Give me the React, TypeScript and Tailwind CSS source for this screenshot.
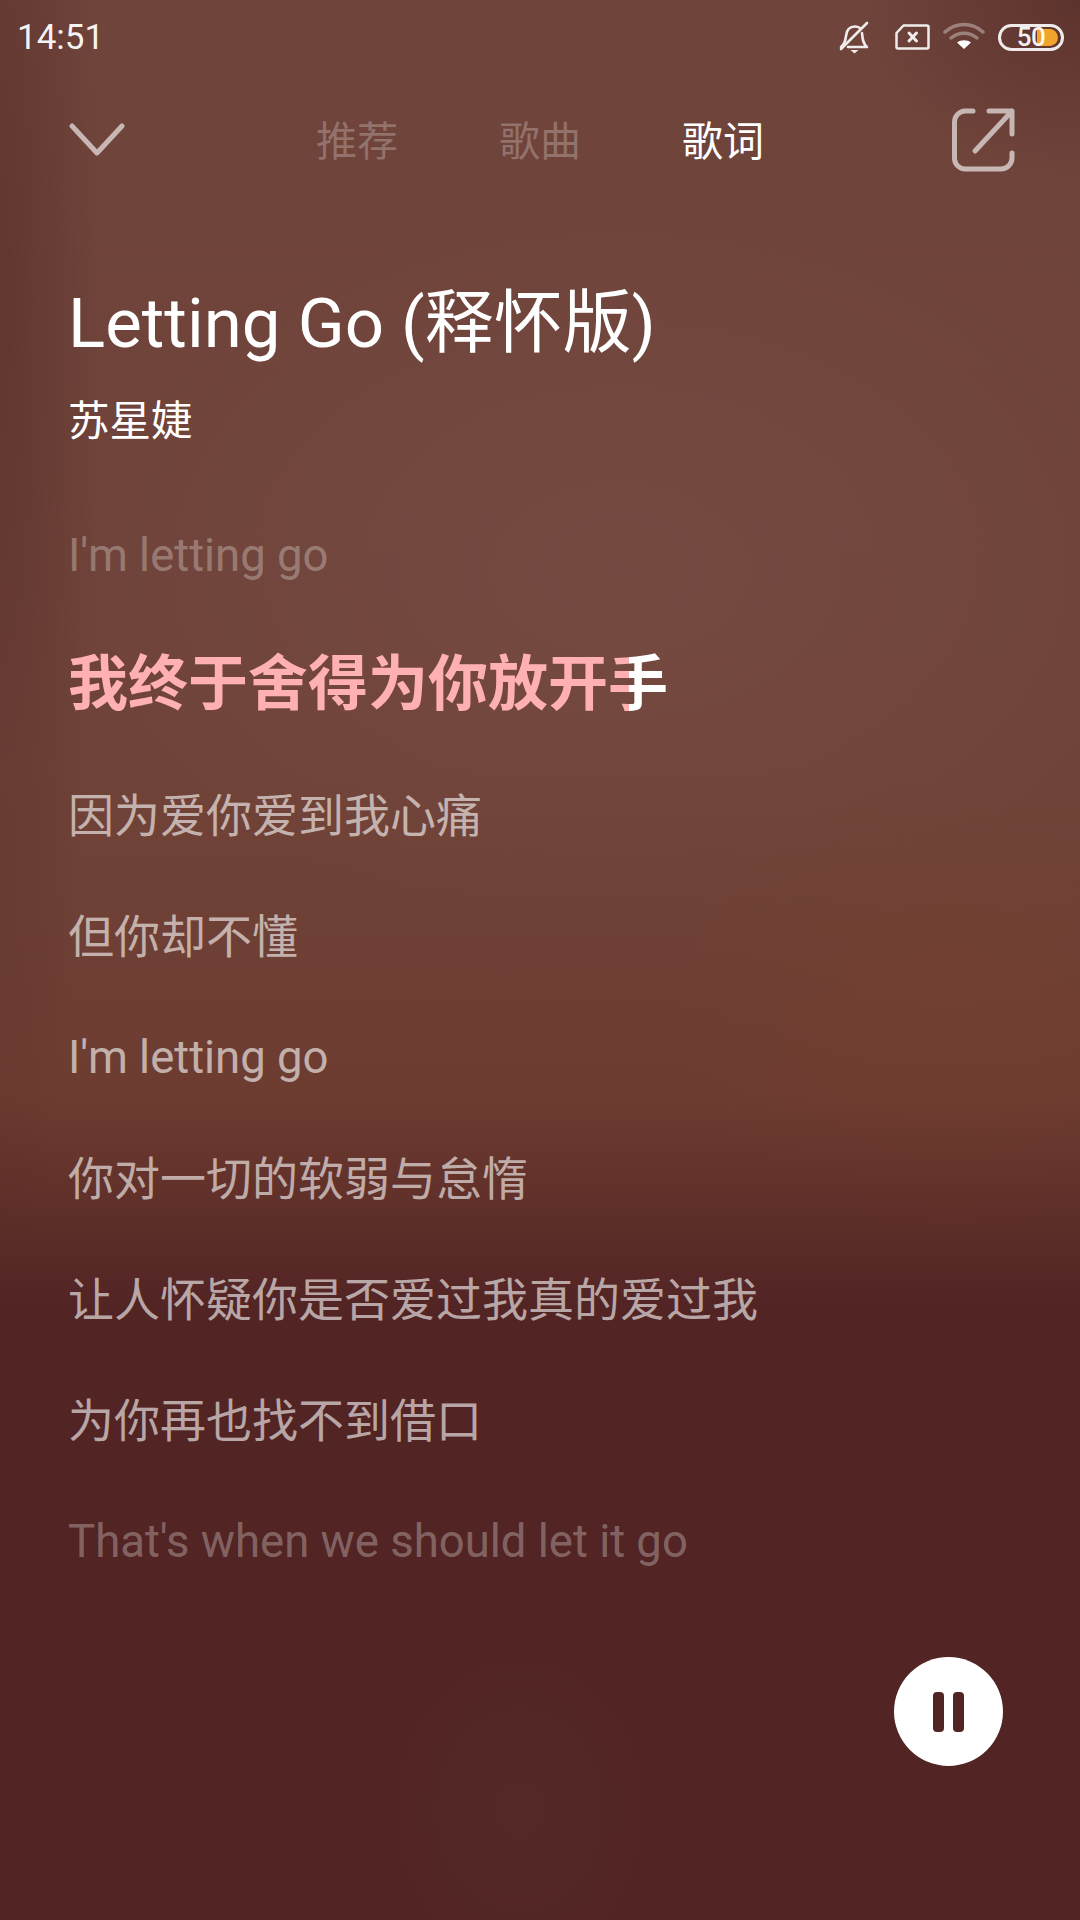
const font = "font-['Roboto','Noto_Sans_CJK_SC',sans-serif]";

const lyrics = [
  { text: '因为爱你爱到我心痛', color: 'text-white/60 text-[46px]' },
  { text: '但你却不懂', color: 'text-white/60 text-[46px]' },
  { text: "I'm letting go", color: 'text-white/60 text-[45.500px]' },
  { text: '你对一切的软弱与怠惰', color: 'text-white/60 text-[46px]' },
  { text: '让人怀疑你是否爱过我真的爱过我', color: 'text-white/60 text-[46px]' },
  { text: '为你再也找不到借口', color: 'text-white/60 text-[46px]' },
  { text: "That's when we should let it go", color: 'text-white/30 text-[45.500px]' },
];

const StatusIcons = () => (
  <div className="flex items-center">
    <svg width="30" height="33" viewBox="0 0 30 33" fill="none" stroke="#fff" strokeWidth="2.6" strokeLinecap="round" strokeLinejoin="round" className="opacity-90">
      <path d="M2 26c3.500-2.500 4.500-6.500 5-11 .5-5.500 3.500-9.500 9-9.500 2 0 3.500.5 5 1.500M23 12c.5 6 1 11 5 14H9" />
      <path d="M2 28 28 2" />
      <path d="M11.500 29h8l-4 3.500z" fill="#fff" stroke="none" />
    </svg>
    <svg width="36" height="28" viewBox="0 0 36 28" fill="none" stroke="#fff" strokeWidth="2.500" strokeLinecap="round" strokeLinejoin="round" className="ml-[25px] opacity-90">
      <path d="M9.500 2.500H33a1.500 1.500 0 0 1 1.500 1.500v20a1.500 1.500 0 0 1-1.500 1.500H4A1.500 1.500 0 0 1 2.500 24V10z" />
      <path d="M15 10l7.500 8M22.500 10 15 18" strokeWidth="3" />
    </svg>
    <svg width="42" height="30" viewBox="0 0 42 30" fill="none" strokeLinecap="round" className="ml-[13px]">
      <path d="M2 10c11-10 27-10 38 0" stroke="#fff" strokeOpacity="0.35" strokeWidth="3.500" />
      <path d="M8 16c8-6.500 18-6.500 26 0" stroke="#fff" strokeOpacity="0.35" strokeWidth="3.500" />
      <path d="M21 27l-7-6.500c4-3 10-3 14 0z" fill="#fff" />
    </svg>
    <div className="relative ml-[13px] flex h-[27px] w-[66px] items-center justify-center rounded-full border-[3px] border-white/90">
      <div className="absolute top-[2px] right-[3px] h-[17px] w-[21px] rounded-r-full bg-[#f2a52c]" />
      <span className="relative text-[26px] leading-none font-medium tracking-[-0.5px] text-white/95">50</span>
    </div>
  </div>
);

const App = () => {
  return (
    <div className={`${font} flex h-[1920px] w-[1080px] flex-col overflow-hidden bg-[#522424] bg-[radial-gradient(ellipse_100px_1000px_at_0px_300px,rgba(60,20,20,0.28),transparent),radial-gradient(ellipse_220px_180px_at_1080px_0px,rgba(60,20,20,0.35),transparent),radial-gradient(ellipse_560px_380px_at_620px_570px,rgba(255,255,255,0.04),transparent),radial-gradient(ellipse_280px_240px_at_950px_1000px,rgba(150,80,30,0.09),transparent),radial-gradient(ellipse_140px_170px_at_520px_1810px,rgba(255,255,255,0.025),transparent),linear-gradient(180deg,#6f443b_0%,#704339_40%,#6d3c31_57%,#5f2f29_63%,#522424_68%,#522424_100%)] text-white`}>
      <div className="flex h-[74px] shrink-0 items-center justify-between pr-[16px] pl-[17px]">
        <span className="text-[35px] leading-none text-white/95">14:51</span>
        <StatusIcons />
      </div>

      <div className="flex h-[136px] shrink-0 items-center justify-between pr-[64px] pl-[64px]">
        <div className="flex w-[66px] -translate-y-[2px] items-center pl-[3px]">
          <svg width="60" height="34" viewBox="0 0 60 34" fill="none" stroke="#fff" strokeOpacity="0.62" strokeWidth="5" strokeLinecap="round" strokeLinejoin="round">
            <path d="M5 3l25 27L55 3" />
          </svg>
        </div>
        <div className="flex gap-[101px] text-[41px] leading-none">
          <span className="text-white/25">推荐</span>
          <span className="text-white/25">歌曲</span>
          <span className="text-white">歌词</span>
        </div>
        <svg width="66" height="66" viewBox="0 0 66 66" fill="none" stroke="#fff" strokeOpacity="0.62" strokeWidth="5" strokeLinecap="round" strokeLinejoin="round" className="-translate-y-[2px]">
          <path d="M23 4H15A11 11 0 0 0 4.500 15v37A11 11 0 0 0 15 62h36a11 11 0 0 0 11-11V46" />
          <path d="M25 44 62 4M39 4h23v23" />
        </svg>
      </div>

      <div className="flex flex-col pl-[69px]">
        <h1 className="mt-[74px] -ml-[1px] text-[69px] leading-[80px] font-normal whitespace-nowrap">Letting Go (释怀版)</h1>
        <p className="mt-[33px] -ml-[1px] text-[41.500px] leading-[50px]">苏星婕</p>
        <p className="mt-[81px] -ml-[1px] text-[45.500px] leading-[56px] text-white/30">I'm letting go</p>
        <p className="mt-[61px] -ml-[1px] text-[60px] leading-[80px] font-bold whitespace-nowrap text-[#ffb0b0]">
          我终于舍得为你放开
          <span className="bg-[linear-gradient(90deg,#ffb0b0_35%,#fff_35%)] bg-clip-text text-transparent">手</span>
        </p>
        <div className="mt-[63px] -ml-[1px] flex flex-col gap-[65px]">
          {lyrics.map((line) => (
            <p key={line.text} className={`leading-[56px] whitespace-nowrap ${line.color}`}>
              {line.text}
            </p>
          ))}
        </div>
      </div>

      <div className="mt-auto mb-[154px] flex justify-end pr-[77px]">
        <div className="flex h-[109px] w-[109px] items-center justify-center gap-[9px] rounded-full bg-white">
          <div className="h-[40px] w-[11px] rounded-[4px] bg-[#522424]" />
          <div className="h-[40px] w-[11px] rounded-[4px] bg-[#522424]" />
        </div>
      </div>
    </div>
  );
};

export default App;
